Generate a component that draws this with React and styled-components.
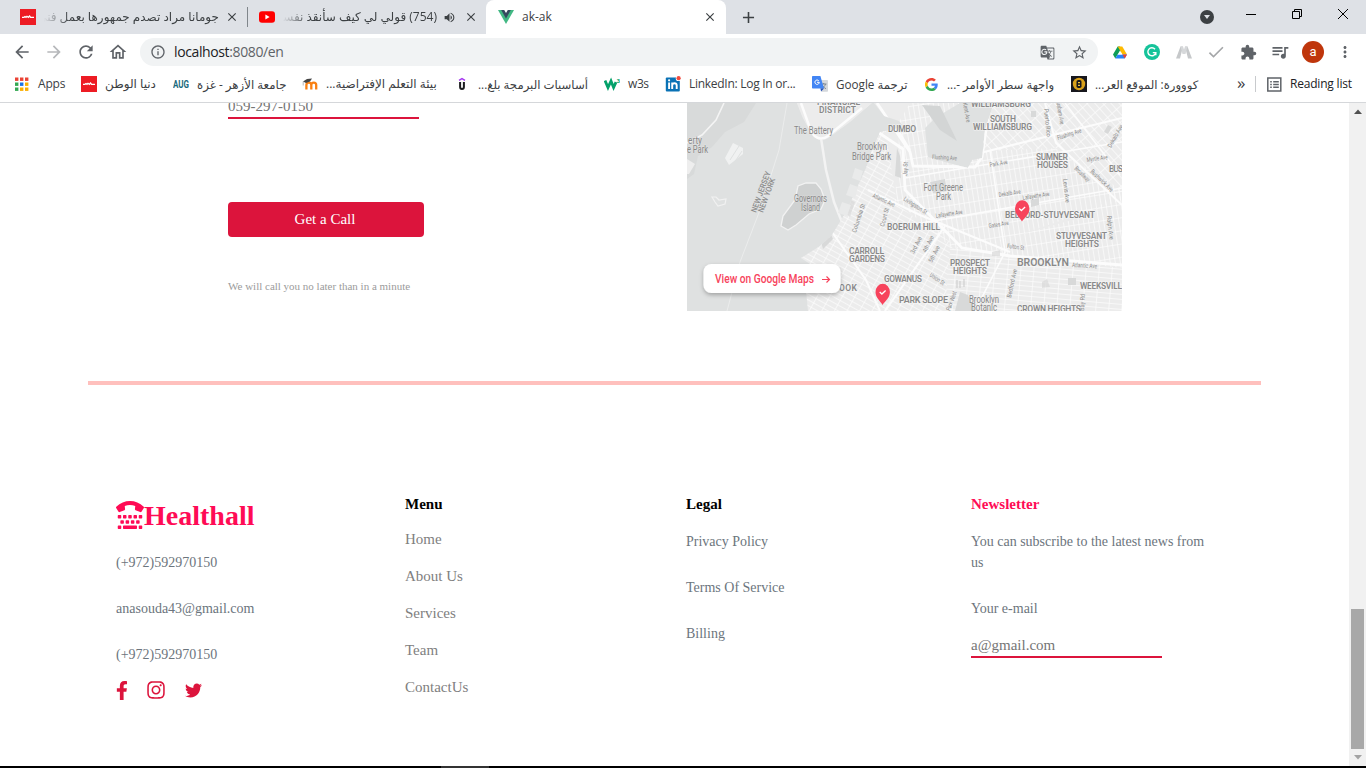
import React from "react";
import styled, { createGlobalStyle, css } from "styled-components";
import {
  MdArrowBack, MdArrowForward, MdRefresh, MdOutlineHome, MdInfoOutline, MdStarBorder,
  MdExtension, MdQueueMusic, MdMoreVert, MdGTranslate, MdClose, MdAdd, MdVolumeUp, MdCheck,
} from "react-icons/md";
import { FaTty, FaFacebookF, FaInstagram, FaTwitter } from "react-icons/fa";

const Global = createGlobalStyle`
  * { box-sizing: border-box; }
  html, body { margin: 0; padding: 0; }
  body { width: 1366px; height: 768px; overflow: hidden; background: #fff; }
`;

const Window = styled.div`
  width: 1366px;
  height: 768px;
  display: flex;
  flex-direction: column;
  font-family: "Open Sans", "DejaVu Sans", sans-serif;
  font-size: 12px;
  color: #3c4043;
  overflow: hidden;
  svg { display: block; flex: none; }
`;

/* ---------- tab strip ---------- */
const TabStrip = styled.div`
  height: 34px;
  flex: none;
  display: flex;
  background: #dee1e6;
  padding-left: 8px;
`;
const Tab = styled.div`
  width: ${(p) => p.$w}px;
  height: 34px;
  display: flex;
  align-items: center;
  padding: 0 ${(p) => p.$pr || 8}px 0 ${(p) => p.$pl || 12}px;
  ${(p) => p.$active && css`background: #fff; border-radius: 8px 8px 0 0;`}
`;
const TabDivider = styled.div`
  width: 1px;
  height: 20px;
  margin-top: 7px;
  background: #80868b;
`;
const TabTitle = styled.div`
  flex: 1;
  min-width: 0;
  height: 20px;
  line-height: 20px;
  margin: 0 6px 0 8px;
  overflow: hidden;
  white-space: nowrap;
  direction: ${(p) => (p.$rtl ? "rtl" : "ltr")};
  ${(p) => p.$rtl && css`mask-image: linear-gradient(to right, transparent 0, #000 26px);`}
`;
const TabSound = styled.div`
  width: 21px;
`;
const NewTab = styled.div`
  width: 44px;
  display: flex;
  align-items: center;
  justify-content: center;
`;
const WindowButtons = styled.div`
  margin-left: auto;
  display: flex;
  align-items: flex-start;
`;
const TabSearch = styled.div`
  width: 14px;
  height: 14px;
  margin: 10px 14px 0 0;
  border-radius: 50%;
  background: #3c4043;
  display: flex;
  align-items: center;
  justify-content: center;
`;
const WinButton = styled.div`
  width: 46px;
  height: 28px;
  display: flex;
  align-items: center;
  justify-content: center;
`;

/* ---------- toolbar ---------- */
const Toolbar = styled.div`
  height: 34px;
  flex: none;
  display: flex;
  align-items: center;
  padding: 2px 12px 0 12px;
  color: #5f6368;
`;
const NavButtons = styled.div`
  display: flex;
  gap: 12px;
  width: 128px;
`;
const Omnibox = styled.div`
  width: 958px;
  height: 28px;
  border-radius: 14px;
  background: #f1f3f4;
  display: flex;
  align-items: center;
  padding: 0 10px;
`;
const PageActions = styled.div`
  display: flex;
  align-items: center;
  gap: 16px;
`;
const Address = styled.div`
  flex: 1;
  margin-left: 8px;
  padding-bottom: 1px;
  font-size: 14px;
  letter-spacing: -0.38px;
  color: #5f6368;
  b { font-weight: 400; color: #202124; }
`;
const Extensions = styled.div`
  display: flex;
  align-items: center;
  gap: 16px;
  margin-left: 14px;
`;
const Avatar = styled.div`
  width: 22px;
  height: 22px;
  margin: 0 -3px 0 -2px;
  border-radius: 50%;
  background: #bf360c;
  color: #fff;
  text-align: center;
  font: 13px/21px "Roboto", sans-serif;
`;

/* ---------- bookmarks ---------- */
const BookmarkBar = styled.div`
  height: 35px;
  flex: none;
  display: flex;
  align-items: center;
  padding: 0 0 2px 14px;
  border-bottom: 1px solid #d5d7da;
`;
const Bookmark = styled.div`
  width: ${(p) => p.$w}px;
  display: flex;
  align-items: center;
  gap: 8px;
`;
const IconBox = styled.div`
  width: 16px;
  height: 16px;
  flex: none;
  display: flex;
  align-items: center;
  justify-content: center;
`;
const BookmarkText = styled.div`
  white-space: nowrap;
  font-size: ${(p) => p.$size || 12}px;
  line-height: 18px;
  letter-spacing: ${(p) => p.$ls || 0}px;
  color: ${(p) => p.$color || "inherit"};
  direction: ${(p) => (p.$rtl ? "rtl" : "ltr")};
`;
const More = styled.div`
  width: 18px;
  font-size: 17px;
  line-height: 18px;
  padding-bottom: 3px;
`;
const BarDivider = styled.div`
  width: 1px;
  height: 16px;
  background: #c8cacd;
  margin: 0 11px 0 0;
`;

/* ---------- page ---------- */
const Viewport = styled.div`
  height: 663px;
  flex: none;
  display: flex;
  overflow: hidden;
`;
const Page = styled.main`
  width: 1349px;
  font-family: "Liberation Serif", serif;
`;
const Contact = styled.section`
  height: 278px;
  display: flex;
  align-items: flex-start;
  padding-left: 228px;
`;
const CallForm = styled.div`
  width: 459px;
  display: flex;
  flex-direction: column;
  align-items: flex-start;
`;
const Field = styled.div`
  width: 191px;
  height: ${(p) => p.$h}px;
  display: flex;
  align-items: flex-end;
  border-bottom: 2px solid #dc143c;
  font-size: 15px;
  line-height: 17px;
  padding-bottom: 2px;
  color: #757575;
  overflow: hidden;
`;
const CallButton = styled.button`
  width: 196px;
  height: 35px;
  margin: 83px 0 42px;
  border: 0;
  border-radius: 4px;
  background: #dc143c;
  color: #fff;
  font: 15px "Liberation Serif", serif;
  padding: 0 2px 1px 0;
`;
const Hint = styled.p`
  margin: 0;
  font-size: 11px;
  line-height: 15px;
  color: #9b9b9b;
`;
const Rule = styled.div`
  width: 1173px;
  height: 4px;
  margin-left: 88px;
  background: #ffc0bd;
`;
const Footer = styled.footer`
  display: flex;
  padding: 110px 0 0 116px;
`;
const Column = styled.div`
  width: ${(p) => p.$w}px;
`;
const Heading = styled.h4`
  margin: 0 0 ${(p) => p.$mb}px;
  font-size: 15px;
  line-height: 18px;
  font-weight: 700;
  color: ${(p) => p.$color || "#000"};
`;
const Brand = styled.div`
  display: flex;
  align-items: center;
  height: 40px;
  font-size: 28px;
  line-height: 40px;
  font-weight: 700;
  color: #ff0b55;
  margin-bottom: 17px;
`;
const BrandName = styled.span`
  padding-top: 2px;
`;
const Line = styled.p`
  margin: 0 0 ${(p) => (p.$mb === undefined ? 25 : p.$mb)}px;
  font-size: 14px;
  line-height: 21px;
  color: #6c757d;
`;
const MenuLink = styled.a`
  display: block;
  height: 37px;
  font-size: 15px;
  line-height: 20px;
  color: #808080;
`;
const Social = styled.div`
  display: flex;
  align-items: center;
  color: #dc143c;
`;
const SocialLink = styled.span`
  width: ${(p) => p.$w}px;
`;

const ScrollBar = styled.div`
  width: 17px;
  background: #f1f1f1;
  display: flex;
  flex-direction: column;
  align-items: center;
`;
const ScrollArrow = styled.div`
  height: 17px;
  display: flex;
  align-items: center;
`;
const Thumb = styled.div`
  width: 13px;
  height: 140px;
  margin: auto 0 0;
  background: #a8a8a8;
`;
const TaskEdge = styled.div`
  height: 2px;
  background: linear-gradient(to right, #000 441px, #333 441px, #333 489px, #000 489px);
`;

/* ---------- drawings ---------- */
const RedLogo = () => (
  <svg width="16" height="16" viewBox="0 0 16 16">
    <rect width="16" height="16" fill="#ed1c24" />
    <path d="M2 8.300h2l1-.8 1 .8 1-1 1.300 1 1.300-1.300 1 1.300H14" stroke="#fff" strokeWidth="1.300" fill="none" />
  </svg>
);
const YouTube = () => (
  <svg width="16" height="16" viewBox="0 0 16 16">
    <rect y="2.300" width="16" height="11.400" rx="3" fill="#f00" />
    <path d="M6.400 5.600v4.800L10.600 8z" fill="#fff" />
  </svg>
);
const Vue = () => (
  <svg width="16" height="16" viewBox="0 0 16 16">
    <path d="M0 1h16L8 15z" fill="#41b883" />
    <path d="M3.200 1h9.600L8 9.400z" fill="#35495e" />
    <path d="M6.200 1h3.600L8 4z" fill="#fff" />
  </svg>
);
const Apps = () => (
  <svg width="16" height="16" viewBox="0 0 16 16">
    {["#ea4335", "#ea4335", "#ea4335", "#34a853", "#1a73e8", "#fbaf00", "#34a853", "#fbaf00", "#fbaf00"].map((c, i) => (
      <rect key={i} x={1 + (i % 3) * 5} y={1.5 + Math.floor(i / 3) * 5} width="3.400" height="3.400" fill={c} />
    ))}
  </svg>
);
const Aug = () => (
  <svg width="16" height="16" viewBox="0 0 16 16">
    <text x="0" y="12" textLength="16" lengthAdjust="spacingAndGlyphs" fontFamily="Roboto, sans-serif" fontWeight="700" fontSize="11" fill="#19697c">AUG</text>
  </svg>
);
const Moodle = () => (
  <svg width="16" height="16" viewBox="0 0 16 16">
    <path d="M4.400 13.500V9a2.400 2.400 0 0 1 4.900 0v4.500M9.300 9a2.400 2.400 0 0 1 4.900 0v4.500" fill="none" stroke="#f98012" strokeWidth="2.300" />
    <path d="M1 5.500 5 3l5-.5L8 5.500 4 7z" fill="#444" />
    <path d="M1.200 5.500v4" stroke="#999" strokeWidth=".7" />
  </svg>
);
const Udemy = () => (
  <svg width="16" height="16" viewBox="0 0 16 16">
    <path d="M5 4.300 8 2.700l3 1.600" stroke="#a435f0" strokeWidth="1.500" fill="none" />
    <path d="M6.100 6v5a1.900 1.900 0 0 0 3.800 0V6" stroke="#1c1d1f" strokeWidth="2" fill="none" />
  </svg>
);
const W3 = () => (
  <svg width="16" height="16" viewBox="0 0 16 16">
    <path d="M1 4.500 4 11.500 7 5l2.600 6.500L12 6.200" stroke="#04a16a" strokeWidth="2.800" fill="none" />
    <text x="12.400" y="6.500" fontFamily="Roboto, sans-serif" fontSize="6" fontWeight="700" fill="#04a16a">3</text>
  </svg>
);
const LinkedIn = () => (
  <svg width="16" height="16" viewBox="0 0 16 16">
    <rect x=".8" y="1.400" width="14" height="14" rx="1" fill="#0a72b5" />
    <path d="M4.100 6.500V13M7.200 6.500V13M7.200 9.500c0-3 4.500-3 4.500 0V13" stroke="#fff" strokeWidth="1.900" fill="none" />
    <circle cx="4.100" cy="4.300" r="1.100" fill="#fff" />
    <circle cx="13.400" cy="2.400" r="2.600" fill="#fff" />
    <circle cx="13.600" cy="2.200" r="2.100" fill="#f04b3e" />
  </svg>
);
const Translate = () => (
  <svg width="16" height="16" viewBox="0 0 16 16">
    <path d="M6 4h9.200a.8.8 0 0 1 .8.8V15a.8.8 0 0 1-.8.8H9.500z" fill="#d5d8dc" />
    <path d="M9 8h5.500M11.700 7v1M13.500 8c-.5 2-2 3.600-3.600 4.500M10.200 9c.8 1.600 2 2.800 3.800 3.700" stroke="#6d7781" strokeWidth=".8" fill="none" />
    <path d="M.8 0h7.600L12 12.500H.8a.8.8 0 0 1-.8-.8V.8A.8.8 0 0 1 .8 0z" fill="#4285f4" />
    <path d="M8.500 12.500H12l-3 3z" fill="#234fb4" />
    <path d="M6.800 4.800a2.200 2.200 0 1 0 .5 1.500H5" stroke="#fff" strokeWidth="1" fill="none" />
  </svg>
);
const GoogleG = () => (
  <svg width="13" height="13" viewBox="0 0 48 48">
    <path fill="#EA4335" d="M24 9.500c3.500 0 6.700 1.200 9.200 3.600l6.900-6.900C35.900 2.400 30.500 0 24 0 14.600 0 6.500 5.400 2.600 13.200l8 6.200C12.400 13.700 17.700 9.500 24 9.500z" />
    <path fill="#4285F4" d="M47 24.600c0-1.600-.2-3.100-.4-4.600H24v9h12.900c-.6 3-2.300 5.500-4.800 7.200l7.700 6C44.400 38 47 31.800 47 24.600z" />
    <path fill="#FBBC05" d="M10.500 28.600a14.500 14.500 0 0 1 0-9.200l-8-6.200a24 24 0 0 0 0 21.600z" />
    <path fill="#34A853" d="M24 48c6.500 0 11.900-2.100 15.900-5.800l-7.700-6c-2.200 1.500-4.900 2.300-8.200 2.300-6.300 0-11.600-4.200-13.500-9.900l-8 6.200C6.500 42.600 14.600 48 24 48z" />
  </svg>
);
const Koora = () => (
  <svg width="16" height="16" viewBox="0 0 16 16">
    <rect width="16" height="16" fill="#17171d" />
    <circle cx="8" cy="8" r="6.200" fill="#d9a11b" />
    <rect x="5.500" y="4" width="5" height="8" rx="1.800" fill="#17171d" />
    <path d="M7 6.700h2M7 9.300h2" stroke="#f3c63c" strokeWidth="1.300" />
  </svg>
);
const ReadingIcon = () => (
  <svg width="15" height="15" viewBox="0 0 15 15" fill="none" stroke="#5f6368" strokeWidth="1.500">
    <rect x=".8" y="1" width="13" height="13" />
    <path d="M3.200 4.700h1.600M6.200 4.700h5.600M3.200 7.500h1.600M6.200 7.500h5.600M3.200 10.300h1.600M6.200 10.300h5.600" />
  </svg>
);
const Drive = () => (
  <svg width="14" height="13" viewBox="0 0 14 13">
    <path d="M4.700.5H7l2 3.800-4.400 4.300-2.300 3.900L0 8.600z" fill="#0f9d58" />
    <path d="M4.700.5h4.600L14 8.600H9.400z" fill="#ffba00" />
    <path d="M4.600 8.600H14l-2.300 3.900H2.300z" fill="#2684fc" />
    <path d="M9.400 8.600H14l-2.300 3.900z" fill="#ea4335" />
    <path d="M7 4.600 9.300 8.600H4.700z" fill="#fff" />
  </svg>
);
const Grammarly = () => (
  <svg width="16" height="16" viewBox="0 0 16 16">
    <circle cx="8" cy="8" r="8" fill="#15c39a" />
    <path d="M11 5.300a4 4 0 1 0 .8 3.300H8.800M11.800 8.400v2.800" stroke="#fff" strokeWidth="1.400" fill="none" />
  </svg>
);
const Peaks = () => (
  <svg width="16" height="14" viewBox="0 0 16 14">
    <path d="M0 13.500 4.500 1.500H7L4 13.500zM16 13.500 11.500 1.500H9l3 12z" fill="#c6c8ca" />
    <path d="M4.500 1.500H7l1 3 1-3h2.500L9.500 9H6.500z" fill="#d6d8da" />
  </svg>
);

/* ---------- map ---------- */
const LAND =
  "M797 103 L803 118 L813 136 Q820 143 828 138 L850 122 L872 103 L874 103 L884 116 L899 121 L904 127 L880 132 L872 150 L866 168 L856 190 L846 212 L838 225 L832 235 L820 246 L801 258 L816 268 L812 280 L806 290 L808 311 L1122 311 L1122 103 L994 103 L985 130 L982 158 L972 160 L968 168 L945 162 L928 157 L925 128 L935 118 L960 103 Z";

const PLACES = [
  ["FINANCIAL", 817, 105, 43, 8.5], ["DISTRICT", 819, 113, 37, 8.5],
  ["DUMBO", 888, 132, 28, 8.5], ["WILLIAMSBURG", 971, 107, 60, 8.5],
  ["SOUTH", 990, 122, 26, 8.5], ["WILLIAMSBURG", 973, 130, 59, 8.5],
  ["SUMNER", 1036, 160, 32, 8.5], ["HOUSES", 1037, 168, 31, 8.5],
  ["BUS", 1109, 172, 14, 8.5], ["BOERUM HILL", 887, 230, 53, 8.5],
  ["CARROLL", 849, 254, 35, 8.5], ["GARDENS", 849, 262, 36, 8.5],
  ["GOWANUS", 884, 282, 38, 8.5], ["OOK", 839, 291, 18, 8.5],
  ["PARK SLOPE", 899, 303, 49, 9], ["PROSPECT", 950, 265.5, 40, 8.5],
  ["HEIGHTS", 953, 274, 34, 8.5], ["BEDFORD-STUYVESANT", 1005, 217.5, 90, 8.5],
  ["STUYVESANT", 1056, 239, 51, 8.5], ["HEIGHTS", 1065, 247, 34, 8.5],
  ["BROOKLYN", 1017, 266, 52, 10.5], ["WEEKSVILL", 1080, 288.5, 42, 8.5],
  ["CROWN HEIGHTS", 1017, 312, 64, 8.5],
];
const SPOTS = [
  ["The Battery", 794, 133.500, 39], ["Brooklyn", 857, 150, 30], ["Bridge Park", 852, 159.500, 39],
  ["Governors", 794, 202, 33], ["Island", 801, 210.500, 19], ["Fort Greene", 923.500, 191, 39.500],
  ["Park", 936, 200, 15], ["Brooklyn", 969, 302.500, 30], ["Botanic", 971, 311, 26],
  ["erty", 688, 143.500, 14], ["e Park", 687, 153, 21],
];
const STREETS = [
  ["Flushing Ave", 932, 159, 25, 3], ["Park Ave", 990, 167, 18, -10], ["Flushing Ave", 1058, 140, 25, -18],
  ["Myrtle Ave", 1087, 162, 21, -8], ["Dekalb Ave", 999, 197, 22, -9], ["Lafayette Ave", 1023, 200, 27, -9],
  ["Lafayette Ave", 936, 218, 27, -9], ["Gates Ave", 989, 228, 20, -9], ["Fulton St", 1007, 248, 17, 7],
  ["Atlantic Ave", 1072, 267, 25, 3], ["Broadway", 1074, 169, 19, 44], ["Bushwick Ave", 1090, 172, 29, 44],
  ["Dekalb Ave", 1111, 148, 25, -60], ["Livingston St", 903, 200, 27, 33], ["Atlantic Ave", 872, 197, 24, 25],
  ["Columbia St", 856, 233, 30, -72], ["Court St", 884, 227, 19, -75], ["Jay St", 907, 176, 14, -87],
  ["3rd Ave", 914, 254, 18, -63], ["4th Ave", 926, 253, 18, -63], ["5th Ave", 932, 263, 18, -63],
  ["Union St", 929, 276, 17, 34], ["Bedford Ave", 1011, 298, 29, -78], ["Lewis Ave", 1063, 179, 24, 84],
  ["Ralph Ave", 1107, 216, 24, 84], ["Kent Ave", 963, 103, 20, 80], ["Puerto Rico", 1044, 109, 28, 84],
  ["Graham Ave", 1056, 101, 24, 80], ["Bay Rd", 1084, 311, 17, -87], ["Park West", 950, 311, 20, -70],
];

const Pin = ({ x, y }) => (
  <g transform={`translate(${x} ${y})`}>
    <path d="M0 11C-2 7-7 4-7-2a7.200 8.300 0 0 1 14.400 0C7.400 4 2.500 7 0 11z" fill="#f7435c" />
    <path d="m-2.800-2 2.200 2 3.700-3.500" stroke="#fff" strokeWidth="1.300" fill="none" />
  </g>
);

const CityMap = () => (
  <svg width="435" height="208" viewBox="687 103 435 208" fontFamily="Roboto, sans-serif">
    <defs>
      <clipPath id="land"><path d={LAND} /></clipPath>
      <pattern id="east" width="5" height="13" patternUnits="userSpaceOnUse" patternTransform="rotate(-9)">
        <path d="M0 0H5M0 0V13" stroke="#fcfcfc" strokeWidth="1.500" />
      </pattern>
      <pattern id="south" width="11" height="5" patternUnits="userSpaceOnUse" patternTransform="rotate(29)">
        <path d="M0 0H11M0 0V5" stroke="#fcfcfc" strokeWidth="1.500" />
      </pattern>
      <pattern id="north" width="6" height="12" patternUnits="userSpaceOnUse" patternTransform="rotate(-42)">
        <path d="M0 0H6M0 0V12" stroke="#fcfcfc" strokeWidth="1.500" />
      </pattern>
      <pattern id="crown" width="13" height="5" patternUnits="userSpaceOnUse" patternTransform="rotate(5)">
        <path d="M0 0H13M0 0V5" stroke="#fcfcfc" strokeWidth="1.500" />
      </pattern>
      <filter id="shadow" x="-10%" y="-30%" width="120%" height="180%">
        <feDropShadow dx="0" dy="2" stdDeviation="2" floodOpacity=".28" />
      </filter>
    </defs>
    <rect x="687" y="103" width="435" height="208" fill="#dfe1e1" />
    <path d="M687 103H756L744 122 725 132 712 147 698 156 694 174 687 179z" fill="#d8dada" />
    <path d="M724 103l-8 17-14 15-15 8" stroke="#f4f4f4" strokeWidth="1.600" fill="none" />
    <path d="M687 159l8 5-6 10h-2z" fill="#eee" />
    <path d="m733 143 10 5v6l-14 11-4-7z" fill="#f0f1f1" />
    <path d="m730 160 9-14M734 163l8-12" stroke="#dfe1e1" />
    <path d="m712 197 4 0 3 3 7-1-1 5-7 2-3-4z" fill="none" stroke="#f1f1f1" strokeWidth="1.200" />
    <path d="M787 103 779 150 760 210 740 262 727 311" stroke="#ebecec" fill="none" />
    <path d="M810 103 821 138 826 170 834 202 847 235 866 280 880 311" stroke="#f3f3f3" strokeWidth="2.500" fill="none" />
    <path d="m806 183 10 0 5 6 4 11-4 9-12 5-13 11-8 5-7-4 2-10 12-16 3-14z" fill="#cfd1d1" stroke="#f2f2f2" strokeWidth="1.300" />
    <path d={LAND} fill="#ececec" />
    <g clipPath="url(#land)">
      <path d="M910 103H1100L1122 170V200L960 255 895 200 900 120z" fill="url(#east)" />
      <path d="M800 311V210L860 120 885 125 897 205 962 250 950 311z" fill="url(#south)" />
      <path d="M970 103H1122V190L1055 148 985 151z" fill="#ececec" />
      <path d="M970 103H1122V190L1055 148 985 151z" fill="url(#north)" />
      <path d="M950 248 1122 268V311H945z" fill="#ececec" />
      <path d="M950 248 1122 268V311H945z" fill="url(#crown)" />
      <path d="M1122 185V268L965 250 1090 215z" fill="url(#east)" />
      <path d="M795 103H872L828 140H813z" fill="#ececec" />
      <path d="M801 103 812 134Q820 142 828 136L862 108" stroke="#fcfcfc" strokeWidth="2.500" fill="none" />
      <g stroke="#fcfcfc" strokeWidth="2.800" fill="none">
        <path d="M877 103 910 152 913 166 975 167 982 157 990 103" />
        <path d="M860 120 903 149 905 190 962 248 1010 256 1122 265" />
        <path d="M868 190 920 215 1010 252M1045 103 1056 143 1122 205M980 153 1122 118" strokeWidth="2" />
        <path d="M905 178 1122 142M910 225 1122 188M1065 103 1120 175M975 311 1005 252 990 150" strokeWidth="1.600" />
        <path d="M832 232 866 280 880 311M945 226 885 311M892 120 910 150" strokeWidth="2" />
      </g>
      <g fill="#d8d9d9">
        <path d="M955 311 960 292 968 295 975 311zM973 145l11-2-2 13-9 1zM930 182l15-3 2 12-14 2zM820 238l9-8 4 9-10 10z" />
        <path d="m1031 111 5 0v6h-5zM1108 125l4 2-4 7-4-2zM1068 278h8v7h-8zM1031 200l8-2v7l-8 2zM897 148l3 8 1 22-6-2z" />
        <path d="m842 210 5-12 8 4-5 15zM1042 282l5-3 3 8-8 1zM992 252l8-2v6h-8z" opacity=".7" />
      </g>
    </g>
    <path d="M922 105 940 106 957 141 940 130z" fill="#d3d5d5" />
    <g fill="#e9eaea"><path d="m855 168 8 3-3 10-8-3zM850 184l8 3-3 11-9-3zM842 202l9 3-4 11-9-3z" /></g>
    <path d="M957 280v8M960 281v7M964 279v8" stroke="#c9c9c9" />
    <g fill="#898989" fontWeight="600" stroke="#f7f7f7" strokeWidth="1.500" paintOrder="stroke" strokeOpacity=".6">
      {PLACES.map(([t, x, y, w, s], i) => (
        <text key={i} x={x} y={y} fontSize={s} textLength={w} lengthAdjust="spacing">{t}</text>
      ))}
    </g>
    <g fill="#888" stroke="#f0f0f0" strokeWidth="1" paintOrder="stroke" strokeOpacity=".4">
      {SPOTS.map(([t, x, y, w], i) => (
        <text key={i} x={x} y={y} fontSize="10" textLength={w} lengthAdjust="spacingAndGlyphs">{t}</text>
      ))}
    </g>
    <g fill="#8a8a8a">
      {STREETS.map(([t, x, y, w, r], i) => (
        <text key={i} fontSize="6.300" textLength={w} lengthAdjust="spacingAndGlyphs" transform={`translate(${x} ${y}) rotate(${r})`}>{t}</text>
      ))}
      <g fontSize="8" fontWeight="500">
        <text transform="translate(756 213) rotate(-70)" textLength="43" lengthAdjust="spacingAndGlyphs">NEW JERSEY</text>
        <text transform="translate(763 213) rotate(-70)" textLength="36" lengthAdjust="spacingAndGlyphs">NEW YORK</text>
      </g>
    </g>
    <Pin x={1022} y={210.5} />
    <Pin x={882.5} y={294} />
    <rect x="703.500" y="264" width="137" height="29" rx="8" fill="#fff" filter="url(#shadow)" />
    <text x="715" y="283" fontSize="12" fontWeight="500" fill="#f7435c" textLength="99" lengthAdjust="spacingAndGlyphs">View on Google Maps</text>
    <path d="M822 279.500h7M826.500 276.500l3 3-3 3" stroke="#f7435c" strokeWidth="1.200" fill="none" />
  </svg>
);

const BOOKMARKS = [
  { icon: <Apps />, text: "Apps", w: 67, ls: -0.2 },
  { icon: <RedLogo />, text: "دنيا الوطن", w: 92, rtl: true },
  { icon: <Aug />, text: "جامعة الأزهر - غزة", w: 129, rtl: true, size: 11.8 },
  { icon: <Moodle />, text: "بيئة التعلم الإفتراضية...", w: 152, rtl: true },
  { icon: <Udemy />, text: "أساسيات البرمجة بلغ...", w: 150, rtl: true, size: 11.7 },
  { icon: <W3 />, text: "w3s", w: 61, ls: -0.4 },
  { icon: <LinkedIn />, text: "LinkedIn: Log In or...", w: 147, ls: -0.28 },
  { icon: <Translate />, text: "ترجمة Google", w: 111, rtl: true, size: 11.7 },
  { icon: <GoogleG />, text: "واجهة سطر الأوامر -...", w: 148, rtl: true, size: 11.7 },
  { icon: <Koora />, text: "كووورة: الموقع العر...", w: 166, rtl: true, size: 11.7 },
];

export default function App() {
  return (
    <Window>
      <Global />
      <TabStrip>
        <Tab $w={239}>
          <RedLogo />
          <TabTitle $rtl>جومانا مراد تصدم جمهورها بعمل فني</TabTitle>
          <MdClose size={14} />
        </Tab>
        <TabDivider />
        <Tab $w={238} $pl={11}>
          <YouTube />
          <TabTitle $rtl>(754) قولي لي كيف سأنقذ نفسي</TabTitle>
          <TabSound><MdVolumeUp size={13} /></TabSound>
          <MdClose size={14} />
        </Tab>
        <Tab $w={240} $pr={9} $active>
          <Vue />
          <TabTitle>ak-ak</TabTitle>
          <MdClose size={14} />
        </Tab>
        <NewTab><MdAdd size={19} /></NewTab>
        <WindowButtons>
          <TabSearch><svg width="6" height="4"><path d="M0 0h6L3 4z" fill="#dee1e6" /></svg></TabSearch>
          <WinButton><svg width="10" height="10"><path d="M0 5.500h10" stroke="#000" /></svg></WinButton>
          <WinButton>
            <svg width="10" height="10" fill="none" stroke="#000"><path d="M.5 2.500h7v7h-7zM2.500 2.500v-2h7v7h-2" /></svg>
          </WinButton>
          <WinButton><svg width="10" height="10"><path d="M0 0l10 10M10 0 0 10" stroke="#000" /></svg></WinButton>
        </WindowButtons>
      </TabStrip>

      <Toolbar>
        <NavButtons>
          <MdArrowBack size={20} />
          <MdArrowForward size={20} color="#b6b8bb" />
          <MdRefresh size={20} />
          <MdOutlineHome size={20} />
        </NavButtons>
        <Omnibox>
          <MdInfoOutline size={16} />
          <Address><b>localhost</b>:8080/en</Address>
          <PageActions>
            <MdGTranslate size={15} />
            <MdStarBorder size={17} />
          </PageActions>
        </Omnibox>
        <Extensions>
          <IconBox><Drive /></IconBox>
          <IconBox><Grammarly /></IconBox>
          <IconBox><Peaks /></IconBox>
          <IconBox><MdCheck size={20} color="#a4a6a8" /></IconBox>
          <IconBox><MdExtension size={17} /></IconBox>
          <IconBox><MdQueueMusic size={20} /></IconBox>
          <Avatar>a</Avatar>
          <IconBox><MdMoreVert size={18} /></IconBox>
        </Extensions>
      </Toolbar>

      <BookmarkBar>
        {BOOKMARKS.map((b) => (
          <Bookmark key={b.text} $w={b.w}>
            <IconBox>{b.icon}</IconBox>
            <BookmarkText $rtl={b.rtl} $size={b.size} $ls={b.ls}>{b.text}</BookmarkText>
          </Bookmark>
        ))}
        <More>»</More>
        <BarDivider />
        <Bookmark $w={90}>
          <ReadingIcon />
          <BookmarkText $ls={-0.2} $color="#202124">Reading list</BookmarkText>
        </Bookmark>
      </BookmarkBar>

      <Viewport>
        <Page>
          <Contact>
            <CallForm>
              <Field $h={16}>059-297-0150</Field>
              <CallButton>Get a Call</CallButton>
              <Hint>We will call you no later than in a minute</Hint>
            </CallForm>
            <CityMap />
          </Contact>
          <Rule />
          <Footer>
            <Column $w={289}>
              <Brand><FaTty size={28} /><BrandName>Healthall</BrandName></Brand>
              <Line>(+972)592970150</Line>
              <Line>anasouda43@gmail.com</Line>
              <Line $mb={15}>(+972)592970150</Line>
              <Social>
                <SocialLink $w={30}>
                  <FaFacebookF size={19} viewBox="0 0 512 512" />
                </SocialLink>
                <SocialLink $w={39}><FaInstagram size={20} /></SocialLink>
                <FaTwitter size={17} />
              </Social>
            </Column>
            <Column $w={281}>
              <Heading $mb={16}>Menu</Heading>
              {["Home", "About Us", "Services", "Team", "ContactUs"].map((t) => <MenuLink key={t}>{t}</MenuLink>)}
            </Column>
            <Column $w={285}>
              <Heading $mb={18}>Legal</Heading>
              <Line>Privacy Policy</Line>
              <Line>Terms Of Service</Line>
              <Line>Billing</Line>
            </Column>
            <Column $w={246}>
              <Heading $mb={18} $color="#ff0b55">Newsletter</Heading>
              <Line>You can subscribe to the latest news from us</Line>
              <Line $mb={18}>Your e-mail</Line>
              <Field $h={21}>a@gmail.com</Field>
            </Column>
          </Footer>
        </Page>
        <ScrollBar>
          <ScrollArrow><svg width="8" height="5"><path d="M0 5 4 .5 8 5z" fill="#505050" /></svg></ScrollArrow>
          <Thumb />
          <ScrollArrow><svg width="8" height="5"><path d="M0 0h8L4 4.500z" fill="#a3a3a3" /></svg></ScrollArrow>
        </ScrollBar>
      </Viewport>
      <TaskEdge />
    </Window>
  );
}
